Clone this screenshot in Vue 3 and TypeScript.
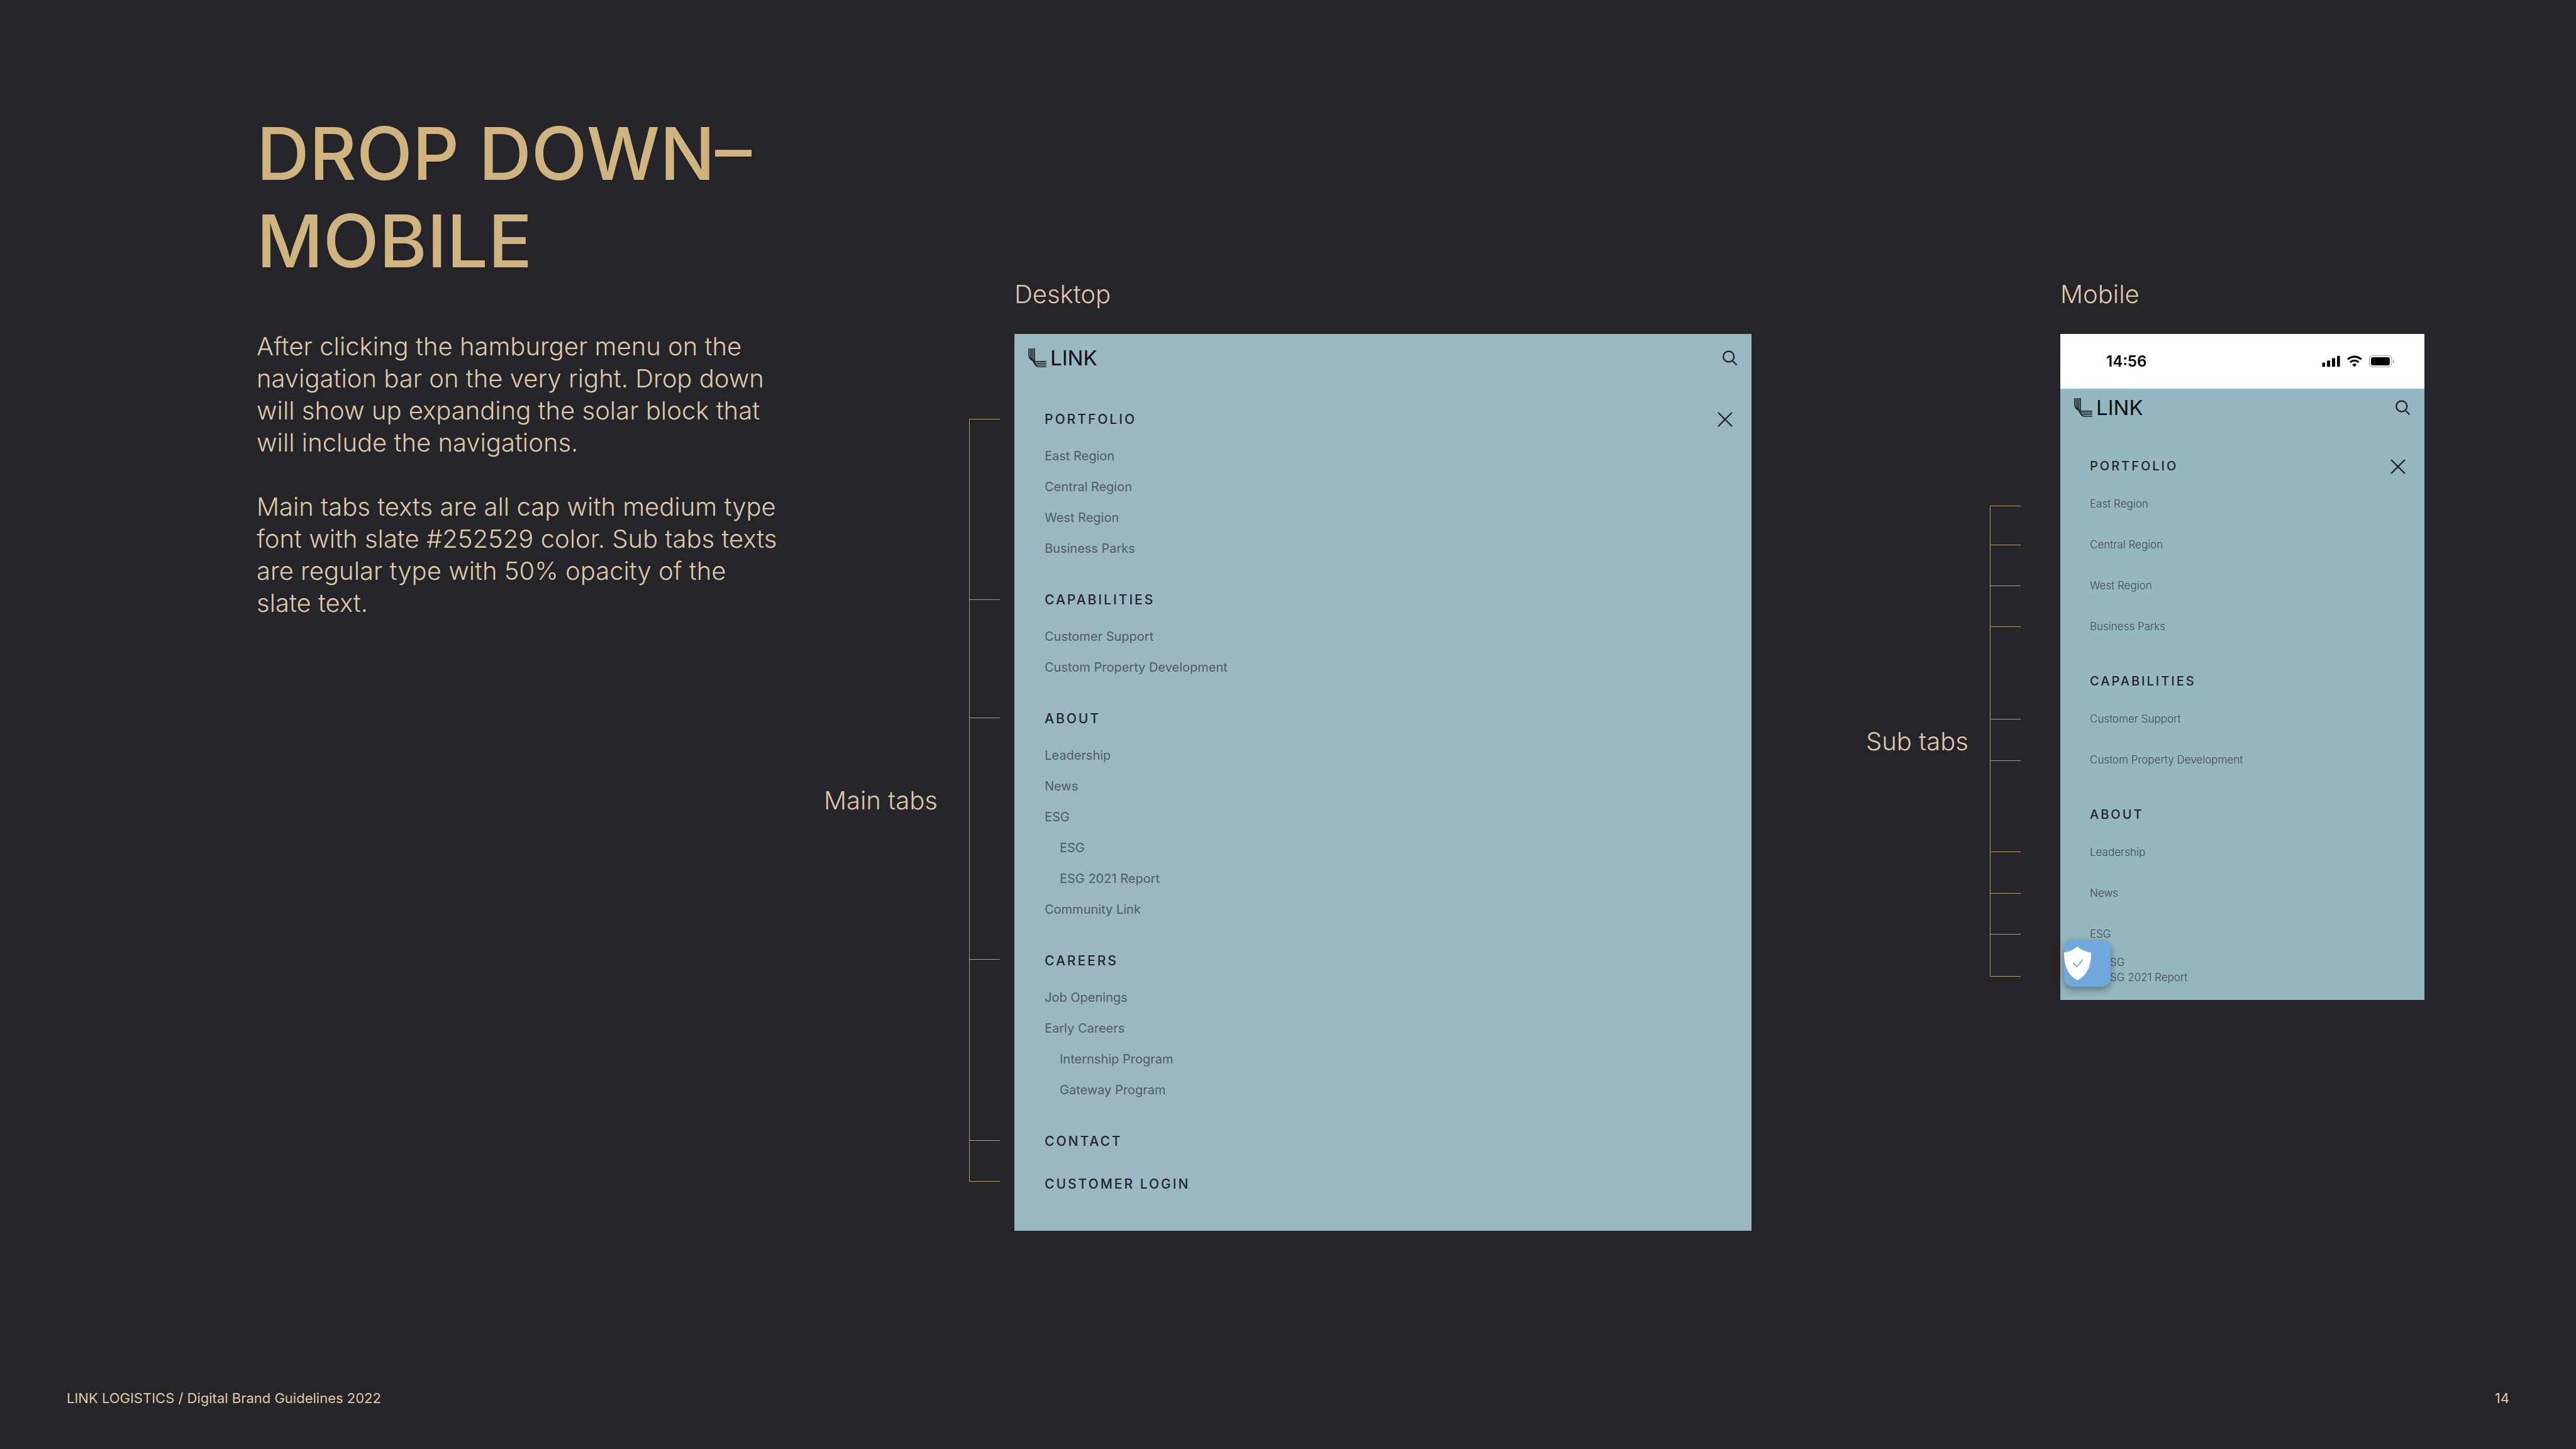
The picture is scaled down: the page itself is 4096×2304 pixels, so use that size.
<script setup lang="ts">
interface NavItem {
  label: string
  children?: string[]
}
interface NavSection {
  title: string
  items: NavItem[]
}

const intro: string[] = [
  'After clicking the hamburger menu on the\nnavigation bar on the very right. Drop down\nwill show up expanding the solar block that\nwill include the navigations.',
  'Main tabs texts are all cap with medium type\nfont with slate #252529 color. Sub tabs texts\nare regular type with 50% opacity of the\nslate text.',
]

const desktopNav: NavSection[] = [
  {
    title: 'PORTFOLIO',
    items: [
      { label: 'East Region' },
      { label: 'Central Region' },
      { label: 'West Region' },
      { label: 'Business Parks' },
    ],
  },
  {
    title: 'CAPABILITIES',
    items: [{ label: 'Customer Support' }, { label: 'Custom Property Development' }],
  },
  {
    title: 'ABOUT',
    items: [
      { label: 'Leadership' },
      { label: 'News' },
      { label: 'ESG', children: ['ESG', 'ESG 2021 Report'] },
      { label: 'Community Link' },
    ],
  },
  {
    title: 'CAREERS',
    items: [
      { label: 'Job Openings' },
      { label: 'Early Careers', children: ['Internship Program', 'Gateway Program'] },
    ],
  },
  { title: 'CONTACT', items: [] },
  { title: 'CUSTOMER LOGIN', items: [] },
]

const mobileNav: NavSection[] = [
  desktopNav[0],
  desktopNav[1],
  { title: 'ABOUT', items: desktopNav[2].items.slice(0, 3) },
]

const panels = [
  { id: 'desktop', name: 'Desktop', note: 'Main tabs', nav: desktopNav, ticks: [287, 188, 384, 288, 65] },
  { id: 'mobile', name: 'Mobile', note: 'Sub tabs', nav: mobileNav, ticks: [62, 65, 65, 147, 66, 145, 66, 65, 67] },
]
</script>

<template>
  <div class="slide">
    <main class="board">
      <section class="intro">
        <h1>DROP DOWN–<br />MOBILE</h1>
        <p v-for="(text, i) in intro" :key="i">{{ text }}</p>
      </section>

      <template v-for="panel in panels" :key="panel.id">
        <aside class="callout" :class="panel.id">
          <div class="callout-body">
            <span class="label">{{ panel.note }}</span>
            <div class="bracket">
              <div v-for="(h, i) in panel.ticks" :key="i" class="tick" :style="{ height: h + 'px' }"></div>
            </div>
          </div>
        </aside>

        <section class="example" :class="panel.id">
          <h2 class="label">{{ panel.name }}</h2>
          <div class="screen">
            <div v-if="panel.id === 'mobile'" class="status">
              <span class="time">14:56</span>
              <svg class="status-icons" viewBox="81 105 450 75" aria-hidden="true">
                <rect x="81" y="150" width="18" height="27" rx="5" />
                <rect x="111" y="138" width="20" height="39" rx="5" />
                <rect x="142" y="123" width="20" height="54" rx="5" />
                <rect x="174" y="108" width="18" height="69" rx="4" />
                <path d="M240 130Q283 97 327 130" fill="none" stroke="#000" stroke-width="12" />
                <path d="M256 149Q283 126 310 149" fill="none" stroke="#000" stroke-width="12" />
                <path d="M269 163Q283 149 297 163L283 178Z" />
                <rect x="377" y="107" width="140" height="71" rx="21" fill="none" stroke="#9c9c9c" stroke-width="4" />
                <rect x="387" y="117" width="118" height="51" rx="13" />
                <path d="M525 134Q531 137 531 143Q531 149 525 152Z" fill="#8c8c8c" />
              </svg>
            </div>

            <header class="bar">
              <a href="#" class="logo" aria-label="Link">
                <svg class="mark" viewBox="87 93 111 117" aria-hidden="true">
                  <g fill="none" stroke="#0b0f10" stroke-width="5">
                    <path d="M89 93V134Q90 154 106 164" />
                    <path d="M98 93V146Q100 158 112 168" />
                    <path d="M107 93V156Q109 164 116 171" />
                    <path d="M115 93V165L120 173" />
                    <path d="M124 93V174" stroke-width="6" />
                    <path d="M198 174H118" stroke-width="6" />
                    <path d="M198 185H135Q122 184 115 172" />
                    <path d="M198 196H141Q128 195 119 179" />
                    <path d="M198 207H150Q134 206 126 189" />
                  </g>
                </svg>
                <span class="wordmark">LINK</span>
              </a>
              <button type="button" class="icon" aria-label="Search">
                <svg viewBox="0 0 24 24" aria-hidden="true">
                  <circle cx="9.700" cy="10" r="8.500" />
                  <path d="M15.500 16.500L22.500 23.200" />
                </svg>
              </button>
            </header>

            <div class="menu">
              <nav :aria-label="panel.name + ' menu'">
                <section v-for="sec in panel.nav" :key="sec.title" :class="{ filled: sec.items.length }">
                  <h3>
                    <a href="#">{{ sec.title }}</a>
                  </h3>
                  <ul v-if="sec.items.length">
                    <li v-for="item in sec.items" :key="item.label">
                      <a href="#">{{ item.label }}</a>
                      <ul v-if="item.children" class="nested">
                        <li v-for="child in item.children" :key="child">
                          <a href="#">{{ child }}</a>
                        </li>
                      </ul>
                    </li>
                  </ul>
                </section>
              </nav>
              <button type="button" class="icon close" aria-label="Close menu">
                <svg viewBox="0 0 24 24" aria-hidden="true">
                  <path d="M1 1L23 23M23 1L1 23" />
                </svg>
              </button>
            </div>

            <button v-if="panel.id === 'mobile'" type="button" class="shield" aria-label="Privacy settings">
              <svg viewBox="0 0 168 209" aria-hidden="true">
                <path d="M83 0Q120 30 168 37Q170 165 83 209Q-2 165 0 37Q46 30 83 0Z" fill="#fff" />
                <path d="M56 101L80 125L116 80" fill="none" stroke="#6ea8dc" stroke-width="7" />
              </svg>
            </button>
          </div>
        </section>
      </template>
    </main>

    <footer>
      <span>LINK LOGISTICS / Digital Brand Guidelines 2022</span>
      <span>14</span>
    </footer>
  </div>
</template>

<style>
body {
  margin: 0;
  background: #252529;
}
</style>

<style scoped>
.slide {
  box-sizing: border-box;
  min-height: 100vh;
  display: flex;
  flex-direction: column;
  background: #252529;
  color: #dfc7ab;
  font-family: Inter, 'Liberation Sans', sans-serif;
  font-weight: 350;
}
h1, h2, h3, p, ul {
  margin: 0;
  padding: 0;
}
ul {
  list-style: none;
}
a {
  color: inherit;
  text-decoration: none;
}
button {
  border: 0;
  padding: 0;
  background: none;
}
.board {
  flex: 1;
  display: grid;
  grid-template-columns: 880fr 325fr 1172fr 491fr 579fr;
  align-items: start;
  padding: 175px 241px 0 408px;
}

/* Copy */
h1 {
  font-size: 116px;
  line-height: 139px;
  font-weight: 500;
  color: #d0b480;
  white-space: nowrap;
  margin-bottom: 72px;
}
.intro p {
  font-size: 40px;
  line-height: 51px;
  white-space: pre;
}
.intro p + p {
  margin-top: 51px;
}
.label {
  font-size: 40px;
  line-height: 51px;
  font-weight: 350;
  white-space: nowrap;
}

/* Brackets pointing at menu rows */
.callout {
  display: flex;
  justify-content: flex-end;
}
.callout.desktop {
  padding: 491px 23px 0 0;
}
.callout.mobile {
  padding: 629px 63px 0 0;
}
.callout-body {
  display: flex;
  align-items: center;
  gap: 50px;
}
.mobile .callout-body {
  gap: 34px;
}
.bracket {
  width: 48px;
  border-left: 1px solid #b39c70;
  border-bottom: 1px solid #b39c70;
}
.tick {
  box-sizing: border-box;
  border-top: 1px solid #b39c70;
}

/* Screens */
.example {
  padding-top: 267px;
}
h2.label {
  margin-bottom: 38px;
}
.screen {
  position: relative;
  background: #99b8c2;
  color: #252529;
}
.mobile .screen {
  background: #95b7bf;
}
.status {
  height: 87px;
  box-sizing: border-box;
  padding: 0 48px 0 73px;
  display: flex;
  align-items: center;
  justify-content: space-between;
  background: #fff;
  color: #000;
}
.time {
  font-size: 24px;
  line-height: 30px;
  font-weight: 600;
}
.status-icons {
  width: 115px;
  height: 19px;
}
.bar {
  height: 76px;
  padding: 0 22px;
  display: flex;
  align-items: center;
  justify-content: space-between;
}
.mobile .bar {
  height: 60px;
}
.logo {
  display: flex;
  align-items: center;
  gap: 6px;
  color: #0b0f10;
}
.mark {
  width: 29px;
  height: 30px;
}
.wordmark {
  font-size: 33px;
  line-height: 33px;
  font-weight: 400;
}
.icon {
  width: 24px;
  height: 24px;
}
.icon svg {
  display: block;
  width: 24px;
  height: 24px;
  fill: none;
  stroke: #252529;
  stroke-width: 2.4;
}
.menu {
  display: flex;
  justify-content: space-between;
  padding: 35px 30px 50px 48px;
}
.mobile .menu {
  padding: 39px 30px 24px 47px;
}
.menu .close {
  height: 49px;
}
nav {
  display: flex;
  flex-direction: column;
  gap: 19px;
}
nav .filled {
  padding-bottom: 13px;
}
h3 {
  font-size: 21px;
  line-height: 49px;
  font-weight: 500;
  letter-spacing: 3px;
}
.filled h3 {
  margin-bottom: 10px;
}
li {
  font-size: 20px;
  line-height: 49px;
  font-weight: 400;
  color: #525a66;
}
.nested {
  padding-left: 24px;
}
.mobile nav {
  gap: 30px;
}
.mobile .filled {
  padding-bottom: 0;
}
.mobile h3 {
  font-size: 20px;
}
.mobile .filled h3 {
  margin-bottom: 3px;
}
.mobile li {
  font-size: 17px;
  line-height: 65px;
  font-weight: 300;
  color: #434a56;
}
.mobile .nested {
  padding-left: 22px;
}
.mobile .nested li {
  line-height: 24px;
}
.shield {
  position: absolute;
  left: 6px;
  bottom: 21px;
  width: 74px;
  height: 74px;
  border-radius: 14px;
  background: #6ea8dc;
  box-shadow: 0 4px 12px rgba(37, 37, 41, 0.5);
  display: flex;
  align-items: center;
}
.shield svg {
  width: 43px;
  height: 54px;
}

footer {
  display: flex;
  justify-content: space-between;
  padding: 0 106px 66px;
  font-size: 22px;
  line-height: 30px;
  font-weight: 400;
}
</style>
